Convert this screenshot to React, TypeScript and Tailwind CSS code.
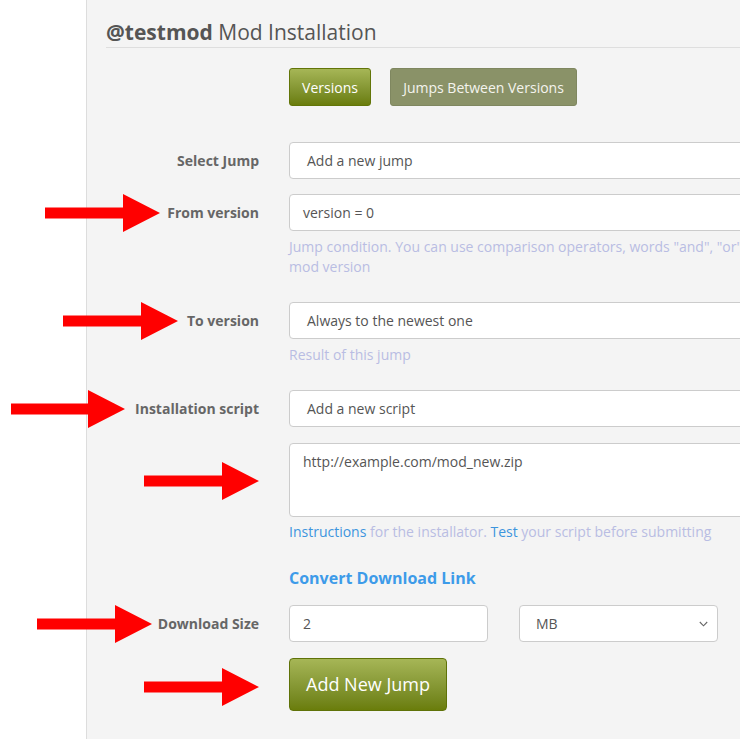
import React from "react";

const font = { fontFamily: '"Open Sans", "Liberation Sans", sans-serif' };

function Arrow({ left, tip, y }: { left: number; tip: number; y: number }) {
  const w = tip - left;
  return (
    <svg
      className="absolute"
      style={{ left, top: y - 20 }}
      width={w}
      height={40}
      viewBox={`0 0 ${w} 40`}
    >
      <polygon
        points={`0,14.5 ${w - 37},14.5 ${w - 37},1 ${w},20 ${w - 37},39 ${w - 37},25.5 0,25.5`}
        fill="#ff0000"
      />
    </svg>
  );
}

function Row({ label, children }: { label?: string; children: React.ReactNode }) {
  return (
    <div className="flex items-center">
      <div className="w-[153px] shrink-0 text-right text-[14px] font-bold text-[#666]">{label}</div>
      <div className="ml-[30px] shrink-0">{children}</div>
    </div>
  );
}

function Field({ text, pad = "pl-[17px]" }: { text: string; pad?: string }) {
  return (
    <div
      className={`flex h-[37px] w-[520px] items-center rounded-[4px] border border-[#cccccc] bg-white ${pad} text-[14px] text-[#555]`}
    >
      {text}
    </div>
  );
}

export default function App() {
  return (
    <div className="relative flex min-h-screen overflow-hidden bg-white" style={font}>
      <div className="w-[87px] shrink-0 border-r border-[#dddddd] bg-white" />
      <div className="min-h-[739px] flex-1 bg-[#f4f4f4] pl-[19px]">
        <div className="w-[700px] border-b border-[#dedede] pt-[18px] leading-[29px] text-[21px] text-[#555]">
          <span className="font-bold">@testmod</span> Mod Installation
        </div>

        <div className="mt-[20px] flex gap-[19px] pl-[183px]">
          <button className="h-[38px] w-[82px] rounded-[3px] border border-[#627508] bg-gradient-to-b from-[#a6b656] to-[#6a7d0a] text-[14px] text-white">
            Versions
          </button>
          <button className="h-[38px] w-[187px] rounded-[3px] border border-[#7f8760] bg-[#8a9268] text-[14px] text-[#f4f4ee]">
            Jumps Between Versions
          </button>
        </div>

        <div className="mt-[36px]">
          <Row label="Select Jump">
            <Field text="Add a new jump" />
          </Row>
        </div>
        <div className="mt-[15px]">
          <Row label="From version">
            <Field text="version = 0" pad="pl-[13px]" />
          </Row>
        </div>
        <div className="mt-[6px] pl-[183px] text-[14px] leading-[20px] text-[#b9bde3]">
          <div className="w-[520px]">
            Jump condition. You can use comparison operators, words "and", "or"
          </div>
          <div>mod version</div>
        </div>
        <div className="mt-[25px]">
          <Row label="To version">
            <Field text="Always to the newest one" />
          </Row>
        </div>
        <div className="mt-[6px] pl-[183px] text-[14px] leading-[20px] text-[#b9bde3]">Result of this jump</div>
        <div className="mt-[25px]">
          <Row label="Installation script">
            <Field text="Add a new script" />
          </Row>
        </div>
        <div className="mt-[16px] pl-[183px]">
          <div className="h-[74px] w-[520px] rounded-[4px] border border-[#cccccc] bg-white pl-[13px] pt-[8px] text-[14px] leading-[20px] text-[#555]">
            http://example.com/mod_new.zip
          </div>
        </div>
        <div className="mt-[5px] pl-[183px] text-[14px] leading-[20px] text-[#b9bde3]">
          <span className="text-[#3d95de]">Instructions</span> for the installator.{" "}
          <span className="text-[#3d95de]">Test</span> your script before submitting
        </div>
        <div className="mt-[25px] pl-[183px] text-[16px] font-bold leading-[22px] text-[#3d9be9]">
          Convert Download Link
        </div>
        <div className="mt-[16px]">
          <Row label="Download Size">
            <div className="flex gap-[31px]">
              <div className="flex h-[37px] w-[199px] items-center rounded-[4px] border border-[#cccccc] bg-white pl-[13px] text-[14px] text-[#555]">
                2
              </div>
              <div className="flex h-[37px] w-[199px] items-center justify-between rounded-[4px] border border-[#cccccc] bg-white pl-[16px] pr-[9px] text-[14px] text-[#555]">
                MB
                <svg width="9" height="6" viewBox="0 0 9 6">
                  <path d="M0.8 1 L4.5 4.8 L8.2 1" fill="none" stroke="#666" strokeWidth="1.1" />
                </svg>
              </div>
            </div>
          </Row>
        </div>
        <div className="mt-[16px] pl-[183px]">
          <button className="h-[53px] w-[158px] rounded-[4px] border border-[#5f7208] bg-gradient-to-b from-[#a6b656] to-[#6a7d0a] text-[18px] text-white">
            Add New Jump
          </button>
        </div>
      </div>

      <Arrow left={45} tip={160} y={213} />
      <Arrow left={63} tip={178} y={321} />
      <Arrow left={11} tip={125} y={409} />
      <Arrow left={144} tip={259} y={481} />
      <Arrow left={37} tip={152} y={624} />
      <Arrow left={144} tip={259} y={687} />
    </div>
  );
}
